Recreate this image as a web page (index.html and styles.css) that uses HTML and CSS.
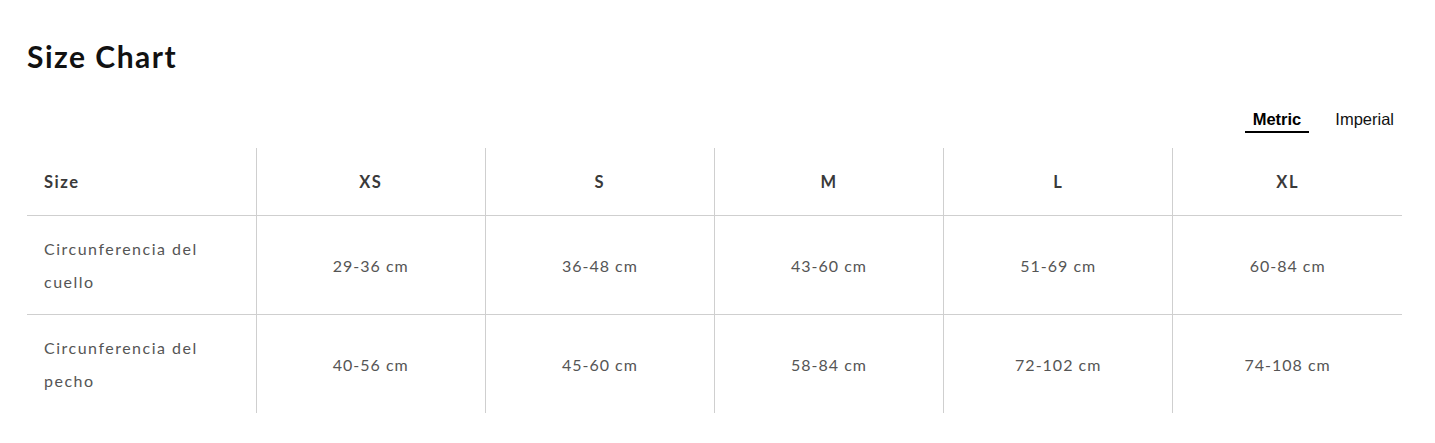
FILE: index.html
```html
<!DOCTYPE html>
<html lang="es">
<head>
<meta charset="utf-8">
<title>Size Chart</title>
<link rel="stylesheet" href="styles.css">
</head>
<body>
<div class="page">
  <h1 class="title">Size Chart</h1>
  <div class="units">
    <button class="unit active">Metric</button>
    <button class="unit">Imperial</button>
  </div>
  <table class="chart">
    <thead>
      <tr>
        <th class="label">Size</th>
        <th>XS</th>
        <th>S</th>
        <th>M</th>
        <th>L</th>
        <th>XL</th>
      </tr>
    </thead>
    <tbody>
      <tr>
        <td class="label">Circunferencia del cuello</td>
        <td>29-36 cm</td>
        <td>36-48 cm</td>
        <td>43-60 cm</td>
        <td>51-69 cm</td>
        <td>60-84 cm</td>
      </tr>
      <tr class="last">
        <td class="label">Circunferencia del pecho</td>
        <td>40-56 cm</td>
        <td>45-60 cm</td>
        <td>58-84 cm</td>
        <td>72-102 cm</td>
        <td>74-108 cm</td>
      </tr>
    </tbody>
  </table>
</div>
</body>
</html>
```

FILE: styles.css
```css
* { box-sizing: border-box; }
body {
  margin: 0;
  background: #fff;
  font-family: "Lato", "Open Sans", sans-serif;
}
.page {
  padding: 0 33px 0 27px;
}
.title {
  margin: 0;
  padding-top: 37px;
  font-size: 30px;
  line-height: 38px;
  font-weight: 700;
  letter-spacing: 1.5px;
  color: #111;
}
.units {
  display: flex;
  justify-content: flex-end;
  gap: 18px;
  margin-top: 34px;
}
.unit {
  background: none;
  border: 0;
  border-bottom: 2px solid transparent;
  padding: 0 8px 2px;
  font-family: "Liberation Sans", Arial, sans-serif;
  font-size: 16.5px;
  line-height: 20px;
  color: #111;
  cursor: pointer;
}
.unit.active {
  font-weight: 700;
  color: #000;
  border-bottom-color: #000;
}
.chart {
  width: 100%;
  margin-top: 15px;
  border-collapse: collapse;
  table-layout: fixed;
}
.chart th,
.chart td {
  padding: 16px 17px 16px;
  font-size: 16px;
  line-height: 33px;
  text-align: center;
  border-left: 1px solid #cfcfcf;
  border-bottom: 1px solid #cfcfcf;
  vertical-align: middle;
}
.chart th {
  padding: 18px 17px 16px;
  color: #3a3a3a;
  font-weight: 700;
  font-size: 16.5px;
  letter-spacing: 1.5px;
}
.chart td {
  color: #555;
  font-weight: 400;
  letter-spacing: 1px;
}
.chart .label {
  text-align: left;
  border-left: 0;
}
.chart td.label {
  letter-spacing: 1.5px;
}
.chart tr.last td {
  border-bottom: 0;
}
```
